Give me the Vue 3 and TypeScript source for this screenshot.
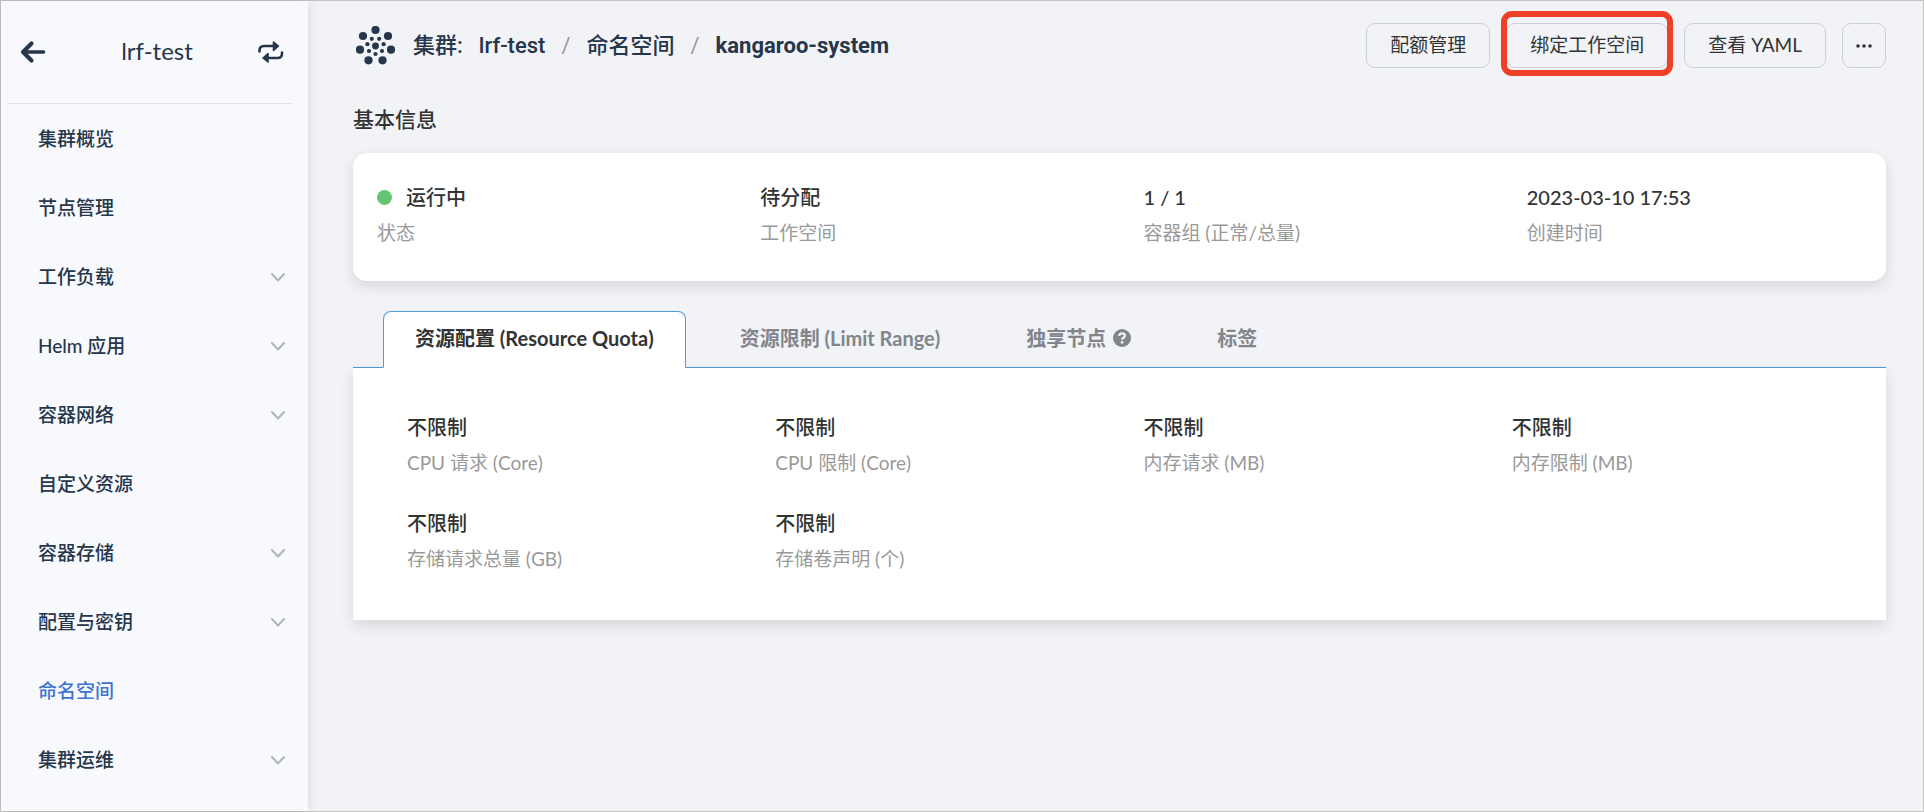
<script setup lang="ts">
interface NavItem { label: string; expandable?: boolean; active?: boolean }
interface Info { value: string; label: string; running?: boolean }
interface Tab { label: string; active?: boolean; help?: boolean }
interface Dot { x: number; y: number; r: number }

const navItems: NavItem[] = [
  { label: '集群概览' },
  { label: '节点管理' },
  { label: '工作负载', expandable: true },
  { label: 'Helm 应用', expandable: true },
  { label: '容器网络', expandable: true },
  { label: '自定义资源' },
  { label: '容器存储', expandable: true },
  { label: '配置与密钥', expandable: true },
  { label: '命名空间', active: true },
  { label: '集群运维', expandable: true },
]

const basics: Info[] = [
  { value: '运行中', label: '状态', running: true },
  { value: '待分配', label: '工作空间' },
  { value: '1 / 1', label: '容器组 (正常/总量)' },
  { value: '2023-03-10 17:53', label: '创建时间' },
]

const tabs: Tab[] = [
  { label: '资源配置 (Resource Quota)', active: true },
  { label: '资源限制 (Limit Range)' },
  { label: '独享节点', help: true },
  { label: '标签' },
]

const quotas: Info[] = [
  { value: '不限制', label: 'CPU 请求 (Core)' },
  { value: '不限制', label: 'CPU 限制 (Core)' },
  { value: '不限制', label: '内存请求 (MB)' },
  { value: '不限制', label: '内存限制 (MB)' },
  { value: '不限制', label: '存储请求总量 (GB)' },
  { value: '不限制', label: '存储卷声明 (个)' },
]

const dots: Dot[] = [
  { x: 20.5, y: 4, r: 4.1 }, { x: 8, y: 10, r: 4.1 }, { x: 33, y: 10, r: 4.1 },
  { x: 5, y: 23.7, r: 4.1 }, { x: 36, y: 23.7, r: 4.1 },
  { x: 13.5, y: 34.3, r: 4.1 }, { x: 27.5, y: 34.3, r: 4.1 },
  { x: 20.5, y: 20, r: 3.4 },
  { x: 16.8, y: 12.8, r: 2.1 }, { x: 24.2, y: 12.8, r: 2.1 },
  { x: 12.4, y: 18.2, r: 2.1 }, { x: 28.6, y: 18.2, r: 2.1 },
  { x: 14, y: 25, r: 2.1 }, { x: 27, y: 25, r: 2.1 }, { x: 20.5, y: 28, r: 2.1 },
]
</script>

<template>
  <div class="app">
    <aside class="sidebar">
      <div class="cluster">
        <button class="icon-btn" type="button" aria-label="返回">
          <svg width="26" height="24" viewBox="0 0 26 24" fill="none" stroke="currentColor" stroke-linecap="round" stroke-linejoin="round">
            <path d="M11.500 3.500L3 12L11.500 20.500" stroke-width="4.200" />
            <path d="M4 12H23.500" stroke-width="3.600" />
          </svg>
        </button>
        <span class="cluster-name">lrf-test</span>
        <button class="icon-btn" type="button" aria-label="切换集群">
          <svg width="26" height="22" viewBox="0 0 26 22" fill="none" stroke="currentColor" stroke-width="2.600" stroke-linecap="round" stroke-linejoin="round">
            <path d="M1.500 10.500V9.500Q1.500 5 6 5H16M24 11.500V12.500Q24 17 19.500 17H10" />
            <path d="M15.500 1L20.500 5L15.500 9.500ZM10 12.500L5 17L10 21Z" fill="currentColor" stroke-width="1.600" />
          </svg>
        </button>
      </div>
      <nav>
        <a v-for="item in navItems" :key="item.label" href="#" class="nav-item" :class="{ active: item.active }">
          <span>{{ item.label }}</span>
          <svg v-if="item.expandable" width="14" height="10" viewBox="0 0 14 10" fill="none" stroke="#b1b4b9" stroke-width="2" stroke-linecap="round" stroke-linejoin="round">
            <path d="M1 2L7 8.500L13 2" />
          </svg>
        </a>
      </nav>
    </aside>

    <main class="main">
      <header class="topbar">
        <svg class="logo" width="41" height="39" viewBox="0 0 41 39" fill="currentColor">
          <circle v-for="(d, i) in dots" :key="i" :cx="d.x" :cy="d.y" :r="d.r" />
        </svg>
        <div class="crumbs">
          <span>集群:</span>
          <a href="#">lrf-test</a>
          <span class="slash">/</span>
          <a href="#">命名空间</a>
          <span class="slash">/</span>
          <strong>kangaroo-system</strong>
        </div>
        <div class="actions">
          <button class="btn" type="button">配额管理</button>
          <button class="btn marked" type="button">绑定工作空间</button>
          <button class="btn" type="button">查看 YAML</button>
          <button class="btn more" type="button" aria-label="更多">
            <svg width="16" height="4" viewBox="0 0 16 4" fill="currentColor">
              <circle cx="2" cy="2" r="1.800" /><circle cx="8" cy="2" r="1.800" /><circle cx="14" cy="2" r="1.800" />
            </svg>
          </button>
        </div>
      </header>

      <h2 class="section-title">基本信息</h2>
      <section class="basics">
        <div v-for="b in basics" :key="b.label" class="info">
          <div class="value"><i v-if="b.running" class="status" />{{ b.value }}</div>
          <div class="label">{{ b.label }}</div>
        </div>
      </section>

      <div class="tabs" role="tablist">
        <button v-for="t in tabs" :key="t.label" type="button" role="tab" class="tab" :class="{ active: t.active }" :aria-selected="!!t.active">
          {{ t.label }}
          <svg v-if="t.help" width="18" height="18" viewBox="0 0 18 18">
            <circle cx="9" cy="9" r="9" fill="currentColor" />
            <path d="M6.200 6.800Q6.400 4.300 9.100 4.300Q11.900 4.300 11.900 6.700Q11.900 8 10.400 8.800Q9.100 9.500 9.100 10.700" fill="none" stroke="#f1f3f7" stroke-width="2.200" />
            <circle cx="9.100" cy="13.400" r="1.400" fill="#f1f3f7" />
          </svg>
        </button>
      </div>
      <section class="panel">
        <div v-for="q in quotas" :key="q.label" class="info">
          <div class="value">{{ q.value }}</div>
          <div class="label">{{ q.label }}</div>
        </div>
      </section>
    </main>
  </div>
</template>

<style>
body {
  margin: 0;
}
</style>

<style scoped>
.app {
  box-sizing: border-box;
  display: flex;
  min-height: 100vh;
  border: 1px solid #c4c4c4;
  background: #f1f3f7;
  color: #333;
  font-family: Lato, "Noto Sans CJK SC", sans-serif;
  font-size: 19px;
  line-height: 28px;
}
a {
  color: inherit;
  text-decoration: none;
}
button {
  font: inherit;
  color: inherit;
  background: none;
  border: 0;
  padding: 0;
  cursor: pointer;
}
svg {
  display: block;
  flex: none;
}
.sidebar {
  flex: none;
  box-sizing: border-box;
  width: 307px;
  background: #f7f9fd;
  color: #26364b;
  box-shadow: 0 0 12px rgba(0, 0, 0, 0.12);
}
.cluster {
  display: flex;
  align-items: center;
  justify-content: space-between;
  height: 102px;
  margin: 0 15px 0 7px;
  padding: 0 9px 0 12px;
  border-bottom: 1px solid #e3e5ea;
}
.cluster-name {
  padding: 0 0 2px 10px;
  font-size: 24px;
}
.nav-item {
  display: flex;
  align-items: center;
  justify-content: space-between;
  height: 69px;
  padding: 0 23px 0 37px;
  font-weight: 500;
}
.nav-item.active {
  color: #3d73d1;
}
.main {
  flex: 1;
  min-width: 0;
  padding: 22px 37px 40px 45px;
}
.topbar {
  display: flex;
  align-items: center;
}
.logo {
  margin-left: 2px;
  color: #26364b;
}
.crumbs {
  display: flex;
  flex: 1;
  gap: 16px;
  margin-left: 17px;
  color: #26364b;
  font-family: Roboto, "Noto Sans CJK SC", sans-serif;
  font-size: 22px;
  font-weight: 500;
}
.crumbs strong {
  font-weight: 700;
}
.slash {
  color: #999;
  font-weight: 400;
}
.actions {
  display: flex;
  gap: 16px;
}
.btn {
  box-sizing: border-box;
  height: 45px;
  padding: 0 23px 2px;
  border: 1px solid #cdcfd8;
  border-radius: 9px;
}
.btn.more {
  padding: 0 13px;
}
.btn.marked {
  position: relative;
}
.btn.marked::after {
  content: "";
  position: absolute;
  inset: -13px -6px -9px;
  border: 6px solid #ee4026;
  border-radius: 11px;
}
.section-title {
  margin: 36px 0 20px;
  font-size: 21px;
  font-weight: 500;
  line-height: 29px;
}
.basics {
  display: grid;
  grid-template-columns: repeat(4, 1fr);
  padding: 30px 0 34px;
  border-radius: 14px;
  background: #fff;
  box-shadow: 0 5px 14px rgba(0, 0, 0, 0.12);
}
.info {
  padding: 0 24px;
}
.value {
  display: flex;
  align-items: center;
  margin-bottom: 8px;
  font-size: 20px;
  font-weight: 500;
}
.label {
  color: #999;
}
.status {
  width: 15px;
  height: 15px;
  margin-right: 14px;
  border-radius: 50%;
  background: #63c573;
}
.tabs {
  display: flex;
  gap: 22px;
  margin-top: 30px;
  padding-left: 30px;
  border-bottom: 1px solid #4f9bdd;
}
.tab {
  display: flex;
  align-items: center;
  gap: 7px;
  box-sizing: border-box;
  height: 57px;
  margin-bottom: -1px;
  padding: 0 31px 4px;
  border: 1px solid transparent;
  border-radius: 8px 8px 0 0;
  color: #82868c;
  font-size: 20px;
  font-weight: 700;
}
.tab.active {
  border-color: #4f9bdd;
  border-bottom-color: #fff;
  background: #fff;
  color: #333;
}
.panel {
  display: grid;
  grid-template-columns: repeat(4, 1fr);
  row-gap: 32px;
  padding: 45px 30px 47px;
  background: #fff;
  box-shadow: 0 5px 14px rgba(0, 0, 0, 0.12);
}
</style>
